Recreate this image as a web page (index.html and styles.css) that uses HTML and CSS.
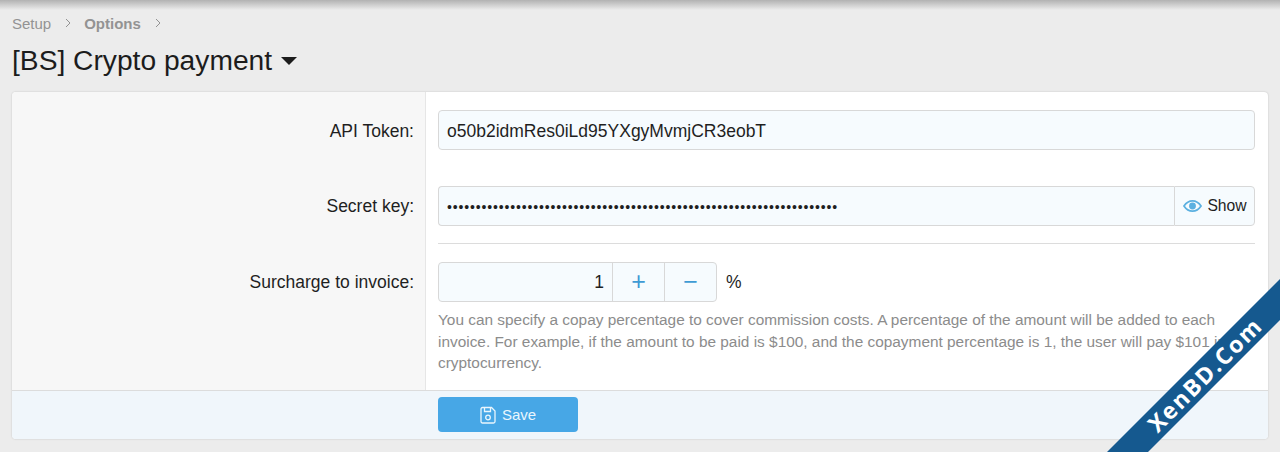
FILE: index.html
```html
<!DOCTYPE html>
<html lang="en">
<head>
    <meta charset="UTF-8">
    <title>[BS] Crypto payment</title>
    <link rel="stylesheet" href="styles.css">
</head>
<body>
    <div class="top-shadow"></div>
    <div class="breadcrumb">
        <span>Setup</span>
        <svg class="crumb-arrow" viewBox="0 0 8 12"><path d="M2 2l4 4-4 4"/></svg>
        <strong>Options</strong>
        <svg class="crumb-arrow" viewBox="0 0 8 12"><path d="M2 2l4 4-4 4"/></svg>
    </div>
    <h1>[BS] Crypto payment <span class="caret"></span></h1>

    <div class="panel">
        <div class="row row-token">
            <div class="row-label">API Token:</div>
            <div class="row-field">
                <div class="input">o50b2idmRes0iLd95YXgyMvmjCR3eobT</div>
            </div>
        </div>
        <div class="row row-secret">
            <div class="row-label">Secret key:</div>
            <div class="row-field">
                <div class="input-group">
                    <div class="input input-secret">••••••••••••••••••••••••••••••••••••••••••••••••••••••••••••••••••••</div>
                    <div class="show-btn">
                        <svg class="eye" viewBox="0 0 20 14">
                            <path d="M1 7c2.400-3.600 5.400-5.400 9-5.400s6.600 1.800 9 5.400c-2.400 3.600-5.400 5.400-9 5.400S3.400 10.600 1 7z"/>
                            <circle cx="10" cy="7" r="3.600"/>
                        </svg>
                        Show
                    </div>
                </div>
            </div>
        </div>
        <div class="row row-surcharge">
            <div class="row-label">Surcharge to invoice:</div>
            <div class="row-field">
                <div class="number-line">
                    <div class="number-box">
                        <div class="number-value">1</div>
                        <div class="number-btn">+</div>
                        <div class="number-btn">&minus;</div>
                    </div>
                    <span class="unit">%</span>
                </div>
                <p class="hint">You can specify a copay percentage to cover commission costs. A percentage of the amount will be added to each invoice. For example, if the amount to be paid is $100, and the copayment percentage is 1, the user will pay $101 in cryptocurrency.</p>
            </div>
        </div>
        <div class="panel-footer">
            <div class="save-btn">
                <svg class="save-icon" viewBox="0 0 16 18">
                    <path d="M3 1.500h8.500L15 5v10.500a1.500 1.500 0 0 1-1.500 1.500h-11A1.500 1.500 0 0 1 1 15.500V3a1.500 1.500 0 0 1 1.500-1.500z"/>
                    <path d="M4.500 1.500v4h6v-4"/>
                    <circle cx="8" cy="11.500" r="2.300"/>
                </svg>
                Save
            </div>
        </div>
    </div>

    <div class="ribbon-clip">
        <div class="ribbon">XenBD.Com</div>
    </div>
</body>
</html>
```

FILE: styles.css
```css
html, body {
    height: 100%;
}

body {
    margin: 0;
    padding: 15px 12px 0;
    box-sizing: border-box;
    overflow: hidden;
    font-family: 'Liberation Sans', Arial, sans-serif;
    font-size: 17.500px;
    color: #1f1f1f;
    background-color: #ececec;
}

.top-shadow {
    position: absolute;
    top: 0;
    left: 0;
    right: 0;
    height: 10px;
    background: linear-gradient(#b2b2b2, #ececec);
}

.breadcrumb {
    display: flex;
    align-items: center;
    height: 16px;
    font-size: 15px;
    color: #939393;
}

.breadcrumb strong {
    font-weight: 700;
}

.crumb-arrow {
    width: 8px;
    height: 12px;
    margin: 0 12px 0 13px;
    fill: none;
    stroke: #939393;
    stroke-width: 1;
}

h1 {
    margin: 12px 0 15px;
    height: 34px;
    font-size: 28.200px;
    line-height: 34px;
    font-weight: 400;
    color: #1c1c1c;
}

.caret {
    display: inline-block;
    width: 0;
    height: 0;
    margin-left: 1px;
    vertical-align: 5px;
    border-left: 8.500px solid transparent;
    border-right: 8.500px solid transparent;
    border-top: 8px solid #1c1c1c;
}

.panel {
    height: 347px;
    display: flex;
    flex-direction: column;
    background-color: #fff;
    border-radius: 4px;
    box-shadow: 0 0 2px rgba(0, 0, 0, 0.2);
    overflow: hidden;
}

.row {
    display: flex;
}

.row-label {
    width: 402px;
    flex-shrink: 0;
    padding-right: 11px;
    text-align: right;
    background-color: #f7f7f7;
    border-right: 1px solid #e6e6e6;
}

.row-field {
    flex: 1;
    padding-left: 12px;
    padding-right: 13px;
}

.row-token {
    height: 76px;
}

.row-token .row-label {
    padding-top: 29px;
}

.row-token .row-field {
    padding-top: 18px;
}

.row-secret {
    height: 76px;
}

.row-secret .row-label {
    padding-top: 28px;
}

.row-secret .row-field {
    padding-top: 18px;
}

.row-secret .row-field::after {
    content: "";
    display: block;
    margin-top: 17px;
    border-bottom: 1px solid #dcdcdc;
}

.row-surcharge {
    height: 146px;
}

.row-surcharge .row-label {
    padding-top: 28px;
}

.row-surcharge .row-field {
    padding-top: 18px;
}

.input {
    height: 40px;
    line-height: 40px;
    padding: 0 8px;
    box-sizing: border-box;
    background-color: #f6fbfe;
    border: 1px solid #d8d8d8;
    border-radius: 4px;
}

.input-group {
    display: flex;
}

.input-secret {
    flex: 1;
    border-right: 0;
    border-radius: 4px 0 0 4px;
    font-size: 14px;
    letter-spacing: 0.850px;
}

.show-btn {
    width: 81px;
    height: 40px;
    box-sizing: border-box;
    display: flex;
    align-items: center;
    justify-content: center;
    gap: 5px;
    padding-left: 1px;
    font-size: 15.700px;
    background-color: #f6fbfe;
    border: 1px solid #d8d8d8;
    border-radius: 0 4px 4px 0;
}

.eye {
    width: 19px;
    height: 14px;
    fill: none;
    stroke: #5bb0e0;
    stroke-width: 1.800;
}

.eye circle {
    fill: #5bb0e0;
    stroke: none;
}

.number-line {
    display: flex;
    align-items: center;
}

.number-box {
    display: flex;
    width: 279px;
    height: 40px;
    box-sizing: border-box;
    background-color: #f6fbfe;
    border: 1px solid #d8d8d8;
    border-radius: 4px;
}

.number-value {
    flex: 1;
    line-height: 38px;
    text-align: right;
    padding-right: 8px;
}

.number-btn {
    width: 51px;
    line-height: 36px;
    text-align: center;
    font-size: 25px;
    color: #3f9ad4;
    border-left: 1px solid #d8d8d8;
}

.unit {
    margin-left: 9px;
}

.hint {
    margin: 7px 0 0;
    font-size: 15.400px;
    line-height: 21.500px;
    color: #8c8c8c;
}

.panel-footer {
    flex: 1;
    padding: 6px 0 0 426px;
    background-color: #f0f6fb;
    border-top: 1px solid #dcdcdc;
}

.save-btn {
    width: 140px;
    height: 35px;
    display: flex;
    align-items: center;
    justify-content: center;
    gap: 6px;
    font-size: 15px;
    color: #eaf6fd;
    background-color: #47a7e6;
    border-radius: 4px;
}

.save-icon {
    width: 16px;
    height: 18px;
    fill: none;
    stroke: #eaf6fd;
    stroke-width: 1.300;
}

.ribbon-clip {
    position: absolute;
    top: 0;
    left: 0;
    width: 100%;
    height: 100%;
    overflow: hidden;
}

.ribbon {
    position: absolute;
    left: 1055px;
    top: 360px;
    width: 300px;
    height: 29px;
    line-height: 29px;
    text-align: center;
    background-color: #15598f;
    transform: rotate(-45deg);
    font-family: 'Open Sans', sans-serif;
    font-weight: 700;
    font-size: 23px;
    letter-spacing: 1.800px;
    color: #fff;
}
```
